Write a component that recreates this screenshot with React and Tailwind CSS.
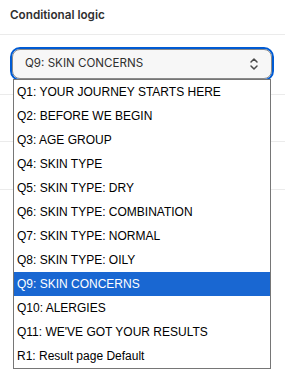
import { useState } from 'react';

const options = [
  'Q1: YOUR JOURNEY STARTS HERE',
  'Q2: BEFORE WE BEGIN',
  'Q3: AGE GROUP',
  'Q4: SKIN TYPE',
  'Q5: SKIN TYPE: DRY',
  'Q6: SKIN TYPE: COMBINATION',
  'Q7: SKIN TYPE: NORMAL',
  'Q8: SKIN TYPE: OILY',
  'Q9: SKIN CONCERNS',
  'Q10: ALERGIES',
  "Q11: WE'VE GOT YOUR RESULTS",
  'R1: Result page Default',
];

function SelectIcon() {
  return (
    <svg width="10" height="14" viewBox="0 0 10 14" fill="none" stroke="#4a4a4a" strokeWidth="1.5" strokeLinecap="round" strokeLinejoin="round">
      <path d="M2 5 L5 2 L8 5" />
      <path d="M2 9 L5 12 L8 9" />
    </svg>
  );
}

export default function App() {
  const [value, setValue] = useState(options[8]);

  return (
    <div className="relative h-[383px] w-[285px] bg-white font-['Inter',sans-serif] text-[#303030]">
      <div className="flex h-[35px] items-center border-b border-[#ebebeb] px-[10px] pb-[2px] text-[11.7px] font-semibold">
        Conditional logic
      </div>
      <div className="h-[60px] border-b border-[#ebebeb] pl-[12px] pt-[14px]">
        <div className="flex h-[30px] w-[260px] items-center justify-between rounded-lg border border-[#8a8a8a] bg-[#f7f7f7] pl-[12px] pr-[12px] text-[11.6px] text-[#303030] outline outline-2 outline-[#005bd3]">
          <span>{value}</span>
          <SelectIcon />
        </div>
      </div>
      <div className="h-[47px] border-b border-[#ebebeb]" />
      <div className="h-[48px] border-b border-[#ebebeb]" />

      <ul className="absolute left-[13px] top-[79px] w-[258px] border border-[#767676] bg-white font-['Liberation_Sans',Arial,sans-serif] text-[12px] text-black">
        {options.map((o) => (
          <li
            key={o}
            onClick={() => setValue(o)}
            className={
              o === value
                ? 'flex h-[24px] items-center bg-[#1967d2] pl-[3px] text-white'
                : 'flex h-[24px] items-center pl-[3px]'
            }
          >
            {o}
          </li>
        ))}
      </ul>
    </div>
  );
}
